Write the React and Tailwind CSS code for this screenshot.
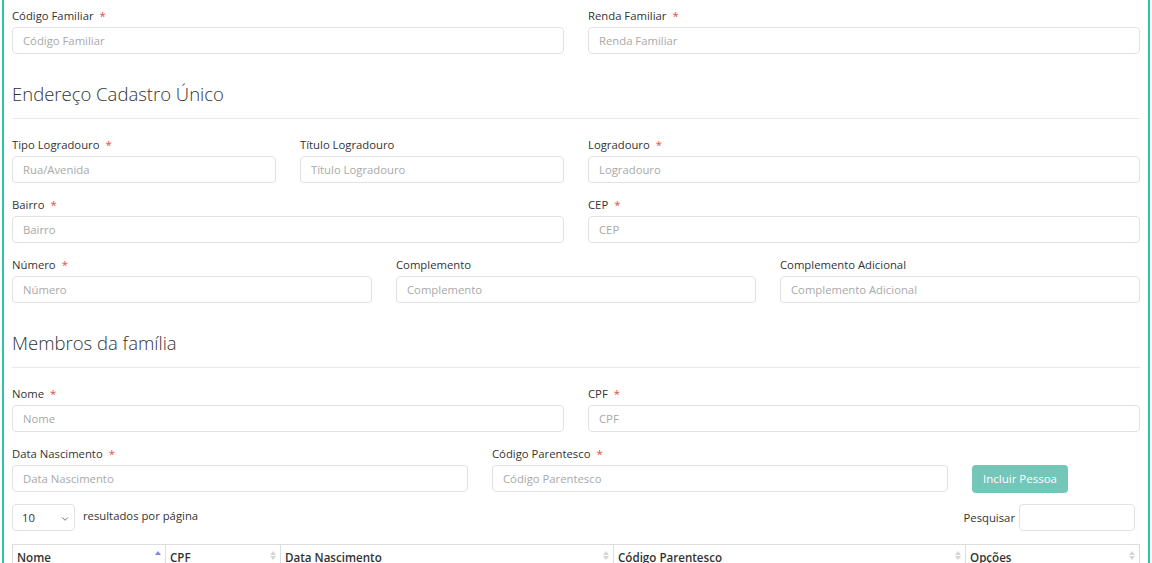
import { ChevronDown } from "lucide-react";

function Label({ text, required }) {
  return (
    <label className="block h-[18px] leading-[18px] mb-[2px] text-[11.3px] text-[#333]">
      {text}
      {required && <span className="ml-[6px] text-[#e74c3c]">*</span>}
    </label>
  );
}

function Field({ label, placeholder, required, className = "" }) {
  return (
    <div className={className}>
      <Label text={label} required={required} />
      <input
        placeholder={placeholder}
        className="block w-full h-[27px] px-[10px] text-[11.3px] border border-[#e2e2e2] rounded-[4px] outline-none placeholder:text-[#a9a9a9]"
      />
    </div>
  );
}

function Heading({ children }) {
  return (
    <div className="mt-[29px] mb-[17px]">
      <h2 className="text-[18.5px] leading-[22px] font-light text-[#333]">{children}</h2>
      <hr className="mt-[13px] border-t border-[#e9e9e9]" />
    </div>
  );
}

function SortIcon({ active }) {
  return (
    <span className="flex flex-col items-center gap-[1px]">
      <span
        className={
          "w-0 h-0 border-x-[3px] border-x-transparent border-b-[4px] " +
          (active ? "border-b-[#8585e0]" : "border-b-[#d5d5d5]")
        }
      />
      {!active && <span className="w-0 h-0 border-x-[3px] border-x-transparent border-t-[4px] border-t-[#d5d5d5]" />}
    </span>
  );
}

const cols = [
  { name: "Nome", w: "w-[152px]", active: true },
  { name: "CPF", w: "w-[115px]" },
  { name: "Data Nascimento", w: "w-[333px]" },
  { name: "Código Parentesco", w: "w-[352px]" },
  { name: "Opções", w: "flex-1" },
];

export default function App() {
  return (
    <div className="min-h-screen bg-white font-['Open_Sans',sans-serif] px-[2px] overflow-hidden h-[563px]">
      <div className="border-x-2 border-[#2ec4a8] px-[8px] pt-[7px] min-h-[563px]">
        <div className="grid grid-cols-12 gap-x-[24px] gap-y-[13px]">
          <Field className="col-span-6" label="Código Familiar" placeholder="Código Familiar" required />
          <Field className="col-span-6" label="Renda Familiar" placeholder="Renda Familiar" required />
        </div>

        <Heading>Endereço Cadastro Único</Heading>

        <div className="grid grid-cols-12 gap-x-[24px] gap-y-[13px]">
          <Field className="col-span-3" label="Tipo Logradouro" placeholder="Rua/Avenida" required />
          <Field className="col-span-3" label="Título Logradouro" placeholder="Título Logradouro" />
          <Field className="col-span-6" label="Logradouro" placeholder="Logradouro" required />
          <Field className="col-span-6" label="Bairro" placeholder="Bairro" required />
          <Field className="col-span-6" label="CEP" placeholder="CEP" required />
          <Field className="col-span-4" label="Número" placeholder="Número" required />
          <Field className="col-span-4" label="Complemento" placeholder="Complemento" />
          <Field className="col-span-4" label="Complemento Adicional" placeholder="Complemento Adicional" />
        </div>

        <Heading>Membros da família</Heading>

        <div className="grid grid-cols-12 gap-x-[24px] gap-y-[13px]">
          <Field className="col-span-6" label="Nome" placeholder="Nome" required />
          <Field className="col-span-6" label="CPF" placeholder="CPF" required />
          <Field className="col-span-5" label="Data Nascimento" placeholder="Data Nascimento" required />
          <Field className="col-span-5" label="Código Parentesco" placeholder="Código Parentesco" required />
          <div className="col-span-2 flex items-end">
            <button className="h-[28px] mb-[-1px] px-[11px] rounded-[4px] bg-[#73c6b8] text-white text-[11.5px]">
              Incluir Pessoa
            </button>
          </div>
        </div>

        <div className="mt-[12px] flex items-center justify-between">
          <div className="flex items-center gap-[8px] text-[11.3px] text-[#333]">
            <div className="relative w-[63px] h-[27px] border border-[#e2e2e2] rounded-[4px] flex items-center px-[9px]">
              <span className="mt-[2px]">10</span>
              <ChevronDown className="absolute right-[4px] top-[9px] w-[10px] h-[10px] text-[#555]" strokeWidth={2} />
            </div>
            <span className="-mt-[2px]">resultados por página</span>
          </div>
          <div className="flex items-center gap-[4px] text-[11.3px] text-[#333] mr-[5px]">
            <span className="mt-[2px]">Pesquisar</span>
            <input className="w-[116px] h-[27px] border border-[#e2e2e2] rounded-[4px] outline-none" />
          </div>
        </div>

        <div className="mt-[13px] flex border border-[#ddd] text-[11.6px] font-semibold text-[#333]">
          {cols.map((c, i) => (
            <div
              key={c.name}
              className={
                c.w +
                " flex items-start justify-between pl-[4px] pr-[4px] pt-[4px] h-[36px] " +
                (i > 0 ? "border-l border-[#ddd]" : "")
              }
            >
              <span className="leading-[18px]">{c.name}</span>
              <span className="mt-[2px]">
                <SortIcon active={c.active} />
              </span>
            </div>
          ))}
        </div>
      </div>
    </div>
  );
}
